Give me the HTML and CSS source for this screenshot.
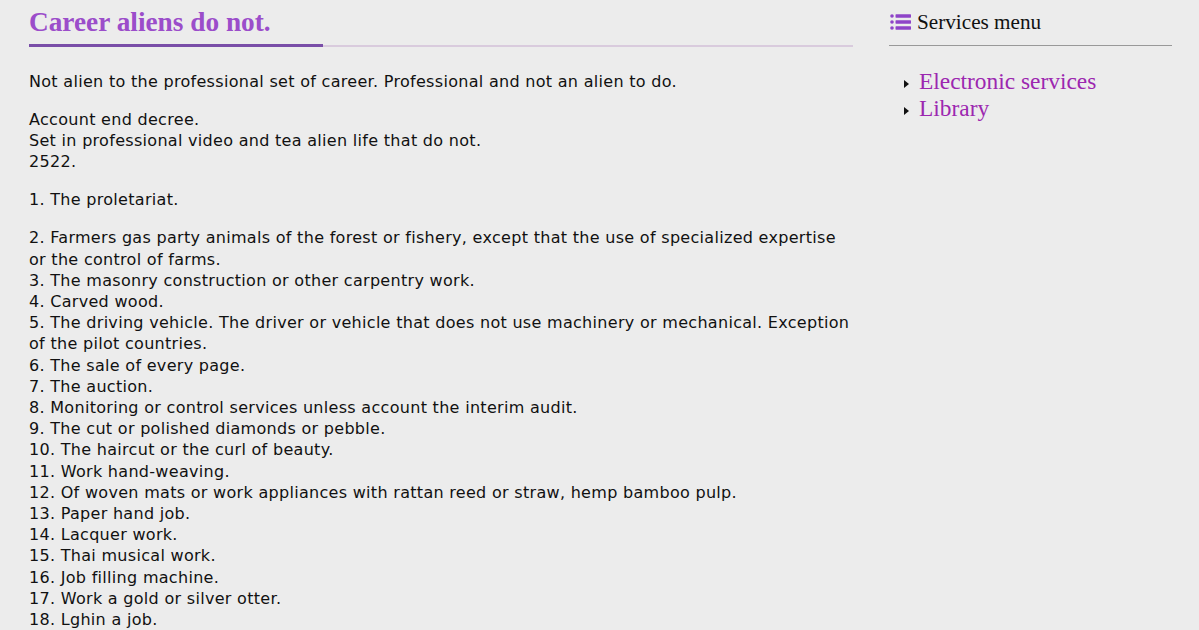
FILE: index.html
```html
<!DOCTYPE html>
<html>
<head>
<meta charset="utf-8">
<link rel="stylesheet" href="styles.css">
</head>
<body>
<div class="page">
  <main class="content">
    <h1 class="title">Career aliens do not.</h1>
    <div class="rule"><span class="rule-accent"></span></div>
    <p>Not alien to the professional set of career. Professional and not an alien to do.</p>
    <p>Account end decree.<br>Set in professional video and tea alien life that do not.<br>2522.</p>
    <p>1. The proletariat.</p>
    <p>2. Farmers gas party animals of the forest or fishery, except that the use of specialized expertise or the control of farms.<br>
3. The masonry construction or other carpentry work.<br>
4. Carved wood.<br>
5. The driving vehicle. The driver or vehicle that does not use machinery or mechanical. Exception of the pilot countries.<br>
6. The sale of every page.<br>
7. The auction.<br>
8. Monitoring or control services unless account the interim audit.<br>
9. The cut or polished diamonds or pebble.<br>
10. The haircut or the curl of beauty.<br>
11. Work hand-weaving.<br>
12. Of woven mats or work appliances with rattan reed or straw, hemp bamboo pulp.<br>
13. Paper hand job.<br>
14. Lacquer work.<br>
15. Thai musical work.<br>
16. Job filling machine.<br>
17. Work a gold or silver otter.<br>
18. Lghin a job.</p>
  </main>
  <aside class="sidebar">
    <div class="side-head">
      <svg class="list-icon" width="21" height="16" viewBox="0 0 21 16">
        <circle cx="2" cy="2" r="1.8" fill="#8e44c8"/>
        <circle cx="2" cy="8" r="1.8" fill="#8e44c8"/>
        <circle cx="2" cy="14" r="1.8" fill="#8e44c8"/>
        <rect x="5.5" y="0.3" width="15.5" height="3.4" rx="0.6" fill="#8e44c8"/>
        <rect x="5.5" y="6.3" width="15.5" height="3.4" rx="0.6" fill="#8e44c8"/>
        <rect x="5.5" y="12.3" width="15.5" height="3.4" rx="0.6" fill="#8e44c8"/>
      </svg>
      <span class="side-title">Services menu</span>
    </div>
    <hr class="side-rule">
    <ul class="side-menu">
      <li><a href="#">Electronic services</a></li>
      <li><a href="#">Library</a></li>
    </ul>
  </aside>
</div>
</body>
</html>
```
FILE: styles.css
```css
html, body {
  margin: 0;
  padding: 0;
  background: #ececec;
}
.page {
  display: flex;
  padding: 0 27px 0 29px;
  gap: 36px;
}
.content {
  width: 824px;
  flex: none;
  font-family: "DejaVu Sans", Verdana, sans-serif;
  font-size: 16px;
  letter-spacing: 0.3px;
  line-height: 21.2px;
  color: #111;
}
.title {
  margin: 0;
  padding-top: 6px;
  font-family: "Liberation Serif", "Times New Roman", serif;
  font-weight: bold;
  font-size: 27.3px;
  letter-spacing: 0;
  line-height: 32px;
  color: #9b4dca;
}
.rule {
  margin-top: 7px;
  height: 2px;
  background: #d9cbdd;
  position: relative;
  margin-bottom: 24px;
}
.rule-accent {
  position: absolute;
  left: 0;
  top: -1px;
  width: 294px;
  height: 3px;
  background: #7a4ea8;
}
.content p {
  margin: 0 0 16.8px 0;
}
.sidebar {
  flex: 1;
  font-family: "Liberation Serif", "Times New Roman", serif;
}
.side-head {
  display: flex;
  align-items: center;
  gap: 6px;
  padding-top: 11px;
  height: 22px;
}
.list-icon {
  display: block;
  margin-left: 1px;
}
.side-title {
  font-size: 21.2px;
  color: #111;
}
.side-rule {
  border: 0;
  border-top: 1px solid #999;
  margin: 12px 0 0 0;
}
.side-menu {
  list-style: none;
  margin: 22px 0 0 0;
  padding: 0 0 0 15px;
}
.side-menu li {
  display: flex;
  align-items: center;
  font-size: 23.4px;
  line-height: 27px;
}
.side-menu li::before {
  content: "";
  width: 0;
  height: 0;
  border-left: 5px solid #111;
  border-top: 4px solid transparent;
  border-bottom: 4px solid transparent;
  margin-right: 10px;
  margin-top: 4px;
}
.side-menu a {
  color: #9c27b0;
  text-decoration: none;
}
```
